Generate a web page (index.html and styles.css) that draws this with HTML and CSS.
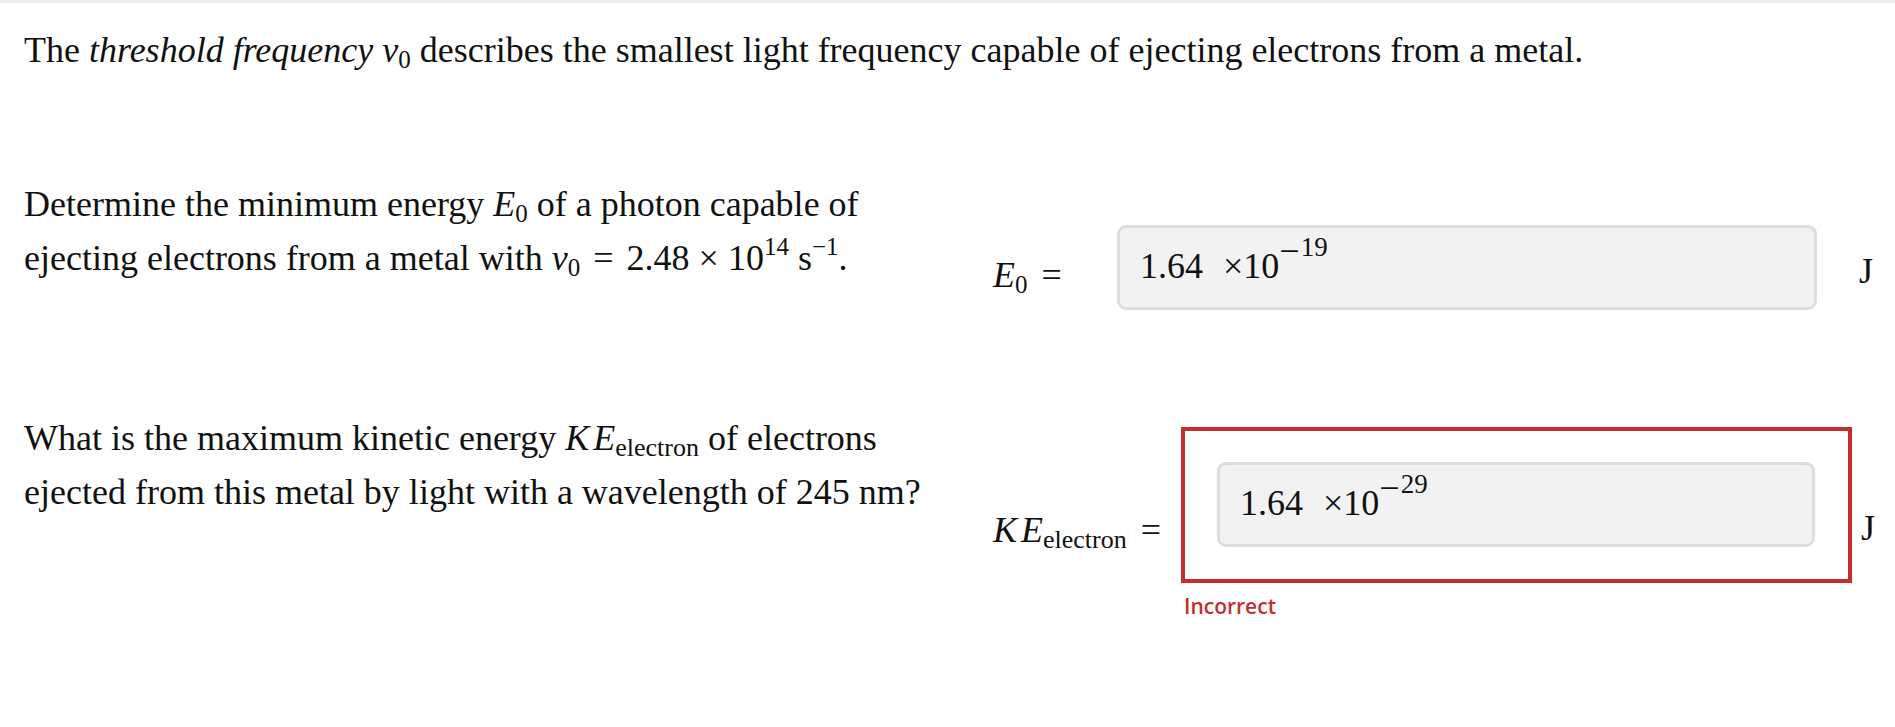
FILE: index.html
```html
<!DOCTYPE html>
<html lang="en">
<head>
<meta charset="utf-8">
<title>Threshold frequency</title>
<link rel="stylesheet" href="styles.css">
</head>
<body>
<div class="topbar"></div>
<div class="page">
  <p class="intro">The <i>threshold frequency</i> <i>ν</i><sub>0</sub> describes the smallest light frequency capable of ejecting electrons from a metal.</p>

  <div class="question q1">
    <p class="prompt">Determine the minimum energy <i>E</i><sub>0</sub> of a photon capable of<br>ejecting electrons from a metal with <i>ν</i><sub>0</sub> <span class="eq">=</span> 2.48 × 10<sup>14</sup> s<sup>−1</sup>.</p>
    <div class="answer a1">
      <div class="label l1"><i>E</i><sub>0</sub><span class="eqs">=</span></div>
      <div class="field f1"><span class="mant">1.64</span><span class="pow">×10<sup class="exp"><span class="minus">−</span>19</sup></span></div>
      <div class="unit u1">J</div>
    </div>
  </div>

  <div class="question q2">
    <p class="prompt">What is the maximum kinetic energy <i class="ke">K</i><i>E</i><sub class="subw">electron</sub> of electrons<br>ejected from this metal by light with a wavelength of 245 nm?</p>
    <div class="answer a2">
      <div class="label l2"><i class="ke">K</i><i>E</i><sub class="subw">electron</sub><span class="eqs">=</span></div>
      <div class="checked">
        <div class="wrong">
          <div class="field f2"><span class="mant">1.64</span><span class="pow">×10<sup class="exp"><span class="minus">−</span>29</sup></span></div>
        </div>
        <div class="feedback">Incorrect</div>
      </div>
      <div class="unit u2">J</div>
    </div>
  </div>
</div>
</body>
</html>
```

FILE: styles.css
```css
html, body {
  margin: 0;
  padding: 0;
  background: #ffffff;
  overflow: hidden;
}

body {
  font-family: "Liberation Serif", "Times New Roman", serif;
  color: #111111;
}

.topbar {
  height: 3px;
  background: #eeeeee;
}

.page {
  padding: 0 0 0 24px;
}

p {
  margin: 0;
}

.intro {
  font-size: 36px;
  line-height: 54px;
  margin-top: 20px;
}

sub, sup {
  font-size: 25px;
  line-height: 0;
}

sub {
  vertical-align: -0.22em;
}

sup {
  vertical-align: 0.6em;
}

.question {
  display: flex;
  align-items: flex-start;
}

.q1 {
  margin-top: 100px;
}

.q2 {
  margin-top: 101px;
}

.prompt {
  flex: 0 0 930px;
  font-size: 36px;
  line-height: 54px;
}

.eq {
  margin: 0 4px;
}

.ke {
  margin-right: 4px;
}

.subw {
  font-size: 26px;
}

.answer {
  display: flex;
  align-items: flex-start;
  margin-left: 39px;
  font-size: 36px;
  line-height: 54px;
}

.a1 {
  margin-top: 48px;
}

.a2 {
  margin-top: 16px;
}

.label {
  white-space: nowrap;
}

.l1 {
  flex: 0 0 124px;
  margin-top: 23px;
}

.l2 {
  flex: 0 0 188px;
  margin-top: 76px;
}

.eqs {
  margin-left: 14px;
}

.field {
  box-sizing: border-box;
  height: 85px;
  background: #f2f2f2;
  border: 3px solid #dddddd;
  border-radius: 9px;
  padding: 11px 0 0 20px;
  white-space: nowrap;
}

.f1 {
  width: 700px;
}

.f2 {
  width: 598px;
}

.mant {
  margin-right: 20px;
}

.exp {
  font-size: 27px;
  vertical-align: 22px;
}

.minus {
  font-size: 36px;
  vertical-align: -7px;
  margin-right: 1px;
}

.unit {
  white-space: nowrap;
}

.u1 {
  margin-left: 42px;
  margin-top: 19px;
}

.u2 {
  margin-left: 9px;
  margin-top: 74px;
}

.checked {
  display: flex;
  flex-direction: column;
}

.wrong {
  box-sizing: border-box;
  width: 671px;
  border: 4px solid #c62d2d;
  padding: 31px 33px 32px 32px;
}

.feedback {
  margin-top: 9px;
  margin-left: 3px;
  font-family: "Open Sans", "Liberation Sans", sans-serif;
  font-weight: 600;
  font-size: 21px;
  line-height: 28px;
  color: #c62d2d;
}
```
